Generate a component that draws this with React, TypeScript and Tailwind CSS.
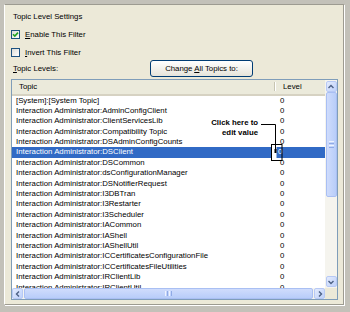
const topics = [
  "[System]:[System Topic]",
  "Interaction Administrator:AdminConfigClient",
  "Interaction Administrator:ClientServicesLib",
  "Interaction Administrator:Compatibility Topic",
  "Interaction Administrator:DSAdminConfigCounts",
  "Interaction Administrator:DSClient",
  "Interaction Administrator:DSCommon",
  "Interaction Administrator:dsConfigurationManager",
  "Interaction Administrator:DSNotifierRequest",
  "Interaction Administrator:I3DBTran",
  "Interaction Administrator:I3Restarter",
  "Interaction Administrator:I3Scheduler",
  "Interaction Administrator:IACommon",
  "Interaction Administrator:IAShell",
  "Interaction Administrator:IAShellUtil",
  "Interaction Administrator:ICCertificatesConfigurationFile",
  "Interaction Administrator:ICCertificatesFileUtilities",
  "Interaction Administrator:IRClientLib",
  "Interaction Administrator:IRClientUtil",
];

function Checkbox({ checked }: { checked: boolean }) {
  return (
    <div className="w-[9px] h-[9px] border border-[#1c5180] bg-gradient-to-br from-[#dcdcd7] to-white flex items-center justify-center">
      {checked && (
        <svg width="7" height="7" viewBox="0 0 7 7">
          <path d="M1 3.2 L2.8 5 L6 1.6" stroke="#21a121" strokeWidth="1.6" fill="none" />
        </svg>
      )}
    </div>
  );
}

function Chevron({ dir }: { dir: "up" | "down" | "left" | "right" }) {
  const d = {
    up: "M1.5 5 L4 2.5 L6.5 5",
    down: "M1.5 3 L4 5.5 L6.5 3",
    left: "M5 1.5 L2.5 4 L5 6.5",
    right: "M3 1.5 L5.5 4 L3 6.5",
  }[dir];
  return (
    <svg width="8" height="8" viewBox="0 0 8 8">
      <path d={d} stroke="#4d6185" strokeWidth="1.4" fill="none" />
    </svg>
  );
}

function ArrowBtn({ dir }: { dir: "up" | "down" | "left" | "right" }) {
  return (
    <div className="w-[11px] h-[11px] rounded-[2px] border border-[#b7c9f5] bg-gradient-to-br from-[#e3ebfd] to-[#bfd1fa] flex items-center justify-center">
      <Chevron dir={dir} />
    </div>
  );
}

export default function App() {
  return (
    <div className="w-[350px] h-[312px] bg-[#c3c1b9] pt-[4px] pl-[4px] font-['Liberation_Sans',Arial,sans-serif] text-[7.8px] text-black">
      <div className="w-[340px] h-[301px] bg-[#ece9d8] border border-[#9d9b91] border-l-white shadow-[1px_1px_0_#ffffff] flex flex-col">
        <div className="mt-[7px] pl-[8px] h-[10px] leading-[10px]">Topic Level Settings</div>

        <div className="mt-[8px] pl-[6px] h-[9px] flex items-center gap-[5px] leading-[9px]">
          <Checkbox checked />
          <span>
            <span className="underline">E</span>nable This Filter
          </span>
        </div>

        <div className="mt-[9px] pl-[6px] h-[9px] flex items-center gap-[5px] leading-[9px]">
          <Checkbox checked={false} />
          <span>
            <span className="underline">I</span>nvert This Filter
          </span>
        </div>

        <div className="mt-[3px] pl-[8px] h-[17px] flex items-center leading-[10px]">
          <span className="w-[137px]">
            <span className="underline">T</span>opic Levels:
          </span>
          <button className="w-[103px] h-[17px] rounded-[3px] border border-[#003c74] bg-gradient-to-b from-white to-[#e6e4da] leading-[10px]">
            Change <span className="underline">A</span>ll Topics to:
          </button>
        </div>

        <div className="mt-[2px] ml-[6px] w-[327px] h-[221px] border border-[#7f9db9] bg-white grid grid-cols-[1fr_12px] grid-rows-[1fr_11px]">
          <div className="relative overflow-hidden">
            <div className="h-[15.5px] bg-[#ebeadb] flex items-center border-b-2 border-[#d6d2c2] relative">
              <div className="w-[262px] pl-[7px] leading-[10px]">Topic</div>
              <div className="w-px h-[9px] bg-[#c7c5b2] shadow-[1px_0_0_#ffffff]" />
              <div className="pl-[8px] leading-[10px]">Level</div>
            </div>
            {topics.map((t, i) => (
              <div
                key={t}
                className={
                  i === 5
                    ? "h-[10.4px] leading-[10.4px] flex whitespace-nowrap bg-[#316ac5] text-white"
                    : "h-[10.4px] leading-[10.4px] flex whitespace-nowrap"
                }
              >
                <div className="w-[262px] pl-[4px] overflow-hidden">{t}</div>
                <div className={i === 5 ? "pl-[4px]" : "pl-[6px]"}>0</div>
              </div>
            ))}

            <div className="absolute left-[189px] top-[38px] w-[57px] text-right font-bold leading-[10px]">
              Click here to
              <br />
              edit value
            </div>
            <svg className="absolute left-0 top-0 pointer-events-none" width="313" height="100" viewBox="0 0 313 100">
              <rect x="260" y="64" width="4.5" height="16" fill="#ffffff" />
              <rect x="259.5" y="64.5" width="10.5" height="16" fill="none" stroke="#000" strokeWidth="1" />
              <path d="M249 44.5 H263.5 V70" stroke="#000" strokeWidth="1" fill="none" />
              <rect x="262.5" y="69" width="2" height="4" fill="#000" />
            </svg>
          </div>

          <div className="bg-[#f5f4ee] flex flex-col items-center pt-[1px] pb-[1px]">
            <ArrowBtn dir="up" />
            <div className="w-[11px] h-[105px] rounded-[2px] border border-[#a9bff3] bg-gradient-to-r from-[#cfdcfc] to-[#b8cdf9] flex flex-col items-center justify-center gap-[1px]">
              <div className="w-[5px] h-px bg-[#eef3fe]" />
              <div className="w-[5px] h-px bg-[#8faae6]" />
              <div className="w-[5px] h-px bg-[#eef3fe]" />
              <div className="w-[5px] h-px bg-[#8faae6]" />
            </div>
            <div className="flex-1" />
            <ArrowBtn dir="down" />
          </div>

          <div className="bg-[#f5f4ee] flex items-center">
            <ArrowBtn dir="left" />
            <div className="flex-1 h-[11px] mx-[1px] rounded-[2px] border border-[#a9bff3] bg-gradient-to-b from-[#cfdcfc] to-[#b8cdf9] flex items-center justify-center gap-[1px]">
              <div className="w-px h-[5px] bg-[#eef3fe]" />
              <div className="w-px h-[5px] bg-[#8faae6]" />
              <div className="w-px h-[5px] bg-[#eef3fe]" />
              <div className="w-px h-[5px] bg-[#8faae6]" />
            </div>
            <ArrowBtn dir="right" />
          </div>

          <div className="bg-[#ece9d8]" />
        </div>
      </div>
    </div>
  );
}
